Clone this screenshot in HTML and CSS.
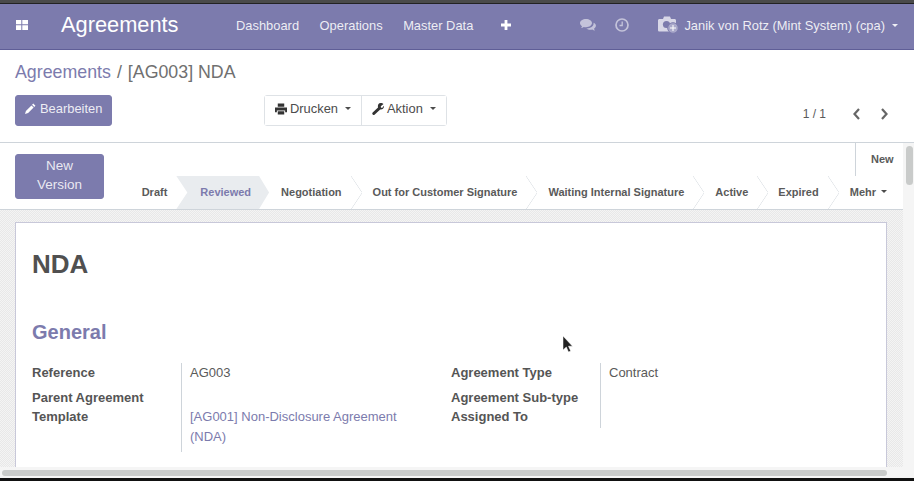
FILE: index.html
```html
<!DOCTYPE html>
<html lang="de">
<head>
<meta charset="utf-8">
<title>Agreements</title>
<link rel="stylesheet" href="styles.css">
</head>
<body>
<div class="topedge"></div>
<header class="navbar">
  <svg class="apps" viewBox="0 0 12 10" width="12" height="10"><path d="M0 0h5.300v4.300H0zM6.300 0h5.700v4.300H6.300zM0 5.300h5.300V10H0zM6.300 5.300h5.700V10H6.300z"/></svg>
  <span class="brand">Agreements</span>
  <nav class="menu"><a>Dashboard</a><a>Operations</a><a>Master Data</a>
    <svg class="plus" viewBox="0 0 10 10" width="10" height="10"><path d="M3.600 0h2.800v3.600H10v2.800H6.400V10H3.600V6.400H0V3.600h3.600z"/></svg>
  </nav>
  <div class="systray">
    <svg class="chat" viewBox="0 0 16 13" width="16" height="13"><path d="M6 0C2.700 0 0 1.800 0 4.100c0 1.200.8 2.300 2 3.100-.2.7-.6 1.300-1 1.800 1 0 2-.5 2.800-1.100.7.2 1.400.3 2.200.3 3.300 0 6-1.800 6-4.100S9.300 0 6 0z"/><path d="M13.500 3.800c.1.300.1.500.1.800 0 2.800-3.100 4.800-6.500 4.800-.3 0-.6 0-.8 0 1.100.8 2.500 1.300 4.100 1.300.7 0 1.300-.1 1.900-.3.700.6 1.700 1 2.700 1.100-.4-.5-.8-1.100-1-1.800 1.200-.8 1.900-1.900 1.900-3.100 0-1.100-.9-2-2.400-2.800z"/></svg>
    <svg class="clock" viewBox="0 0 14 14" width="14" height="14"><circle cx="7" cy="7" r="6" fill="none" stroke-width="1.700"/><path d="M7.200 3.500v4H4.500" fill="none" stroke-width="1.300"/></svg>
    <svg class="avatar" viewBox="0 0 22 20" width="22" height="20"><path class="cam" d="M0 5.500C0 4.500.7 4 1.500 4H5l1-2.500h6L13 4h3.500c.8 0 1.500.5 1.500 1.500V15c0 1-.7 1.500-1.500 1.500h-15C.7 16.500 0 16 0 15z"/><circle class="lens" cx="8.500" cy="9.500" r="3.600"/><circle class="badge" cx="15" cy="13" r="5.300"/><path class="badgeplus" d="M15 10v6M12 13h6"/></svg>
    <span class="user">Janik von Rotz (Mint System) (cpa)</span><i class="caret"></i>
  </div>
</header>

<section class="controlpanel">
  <div class="crumbs"><a>Agreements</a><span class="sep">/</span><span>[AG003] NDA</span></div>
  <div class="cp-row">
    <button class="btn primary edit"><svg viewBox="0 0 12 12" width="11" height="11"><path d="M9 .6l2.400 2.400-1.300 1.300L7.700 1.900zM7 2.600L9.400 5 3.400 11 0 12l1-3.400z"/></svg>Bearbeiten</button>
    <div class="btngroup">
      <button class="btn"><svg viewBox="0 0 13 12" width="12" height="12"><path d="M3 0h7v3.500H3zM0 4.500h13V9.500H11V7.500H2v2H0zM3 8.500h7V12H3z"/></svg>Drucken<i class="caret dark"></i></button>
      <button class="btn"><svg viewBox="0 0 12 12" width="12" height="12"><path d="M8.500 0C10 0 11 .5 11.500 1L8.800 3.200l.1 1.300 1.200.6L12 2.700c.3 1.900-1.200 4.200-3.800 3.800L2.800 11.600c-.6.600-1.600.6-2.100 0-.6-.6-.6-1.500 0-2.100l5.300-5C5.500 2.200 6.500 0 8.500 0z"/></svg>Aktion<i class="caret dark"></i></button>
    </div>
    <div class="pager">
      <span class="count">1 / 1</span>
      <svg viewBox="0 0 8 12" width="9" height="12"><path d="M6.500 1L2 6l4.500 5" fill="none" stroke-width="2.200"/></svg>
      <svg viewBox="0 0 8 12" width="9" height="12"><path d="M1.500 1L6 6l-4.500 5" fill="none" stroke-width="2.200"/></svg>
    </div>
  </div>
</section>

<div class="viewport">
  <main class="scrollarea">
    <div class="statusbar">
      <button class="btn primary newversion">New<br>Version</button>
      <div class="status-right">
        <div class="kanban"><span>New</span></div>
        <div class="stages">
          <span class="stage draft">Draft</span>
          <span class="stage current">Reviewed</span>
          <span class="stage">Negotiation</span>
          <span class="stage">Out for Customer Signature</span>
          <span class="stage">Waiting Internal Signature</span>
          <span class="stage">Active</span>
          <span class="stage expired">Expired</span>
          <span class="stage more">Mehr<i class="caret dark"></i></span>
        </div>
      </div>
    </div>
    <div class="background">
      <article class="sheet">
        <h1>NDA</h1>
        <h2>General</h2>
        <div class="cols">
          <div class="fields left">
            <div class="labels">
              <div class="lab one">Reference</div>
              <div class="lab">Parent Agreement<br>Template</div>
            </div>
            <div class="values">
              <div class="val one">AG003</div>
              <div class="val link">[AG001] Non-Disclosure Agreement (NDA)</div>
            </div>
          </div>
          <div class="fields right">
            <div class="labels">
              <div class="lab one">Agreement Type</div>
              <div class="lab">Agreement Sub-type</div>
              <div class="lab">Assigned To</div>
            </div>
            <div class="values">
              <div class="val one">Contract</div>
            </div>
          </div>
        </div>
      </article>
    </div>
  </main>
  <div class="vscroll"><div class="vthumb"></div></div>
</div>
<div class="hscroll"><div class="hthumb"></div></div>
<div class="bottomedge"></div>
<svg class="cursor" viewBox="0 0 12 19" width="12" height="19"><path d="M1 1v14l3.300-3 2.200 5 2.200-1-2.200-4.800H10.500z"/></svg>
</body>
</html>
```

FILE: styles.css
```css
* { box-sizing: border-box; }
html, body { margin: 0; padding: 0; height: 481px; overflow: hidden; }
body {
  width: 914px;
  position: relative;
  display: flex;
  flex-direction: column;
  font-family: "Liberation Sans", Arial, sans-serif;
  font-size: 13px;
  color: #5a5a5a;
  background: #fff;
}
.topedge { height: 4px; flex: none; background: #4a4a4a; border-bottom: 1px solid #222; }
.navbar {
  height: 46px; flex: none;
  display: flex; align-items: center;
  padding-bottom: 3px;
  background: #7c7bad;
  border-bottom: 1px solid #5f5e97;
  color: #fff;
}
.apps { fill: #fff; margin-left: 16px; }
.brand { font-size: 21.800px; margin-left: 33px; width: 175px; color: #fff; }
.menu { display: flex; align-items: center; gap: 20.500px; font-size: 12.900px; color: rgba(255,255,255,.88); }
.plus { fill: #fff; margin-left: 7px; }
.systray { margin-left: auto; display: flex; align-items: center; color: rgba(255,255,255,.88); padding-right: 16px; font-size: 12.900px; }
.chat { fill: rgba(255,255,255,.55); }
.clock { stroke: rgba(255,255,255,.55); margin-left: 19px; }
.avatar { margin-left: 29px; }
.cam { fill: rgba(255,255,255,.7); }
.lens { fill: #7c7bad; }
.badge { fill: #a9a8ca; stroke: #7c7bad; stroke-width: 1; }
.badgeplus { stroke: #fff; stroke-width: 1; fill: none; }
.user { margin-left: 4px; }
.caret { display: inline-block; margin-left: 7px; width: 0; height: 0; border-top: 3.500px solid rgba(255,255,255,.88); border-left: 3.500px solid transparent; border-right: 3.500px solid transparent; }
.caret.dark { border-top: 3px solid #4c4c4c; border-left-width: 3px; border-right-width: 3px; margin-left: 4px; }

.controlpanel { height: 93px; flex: none; padding: 12px 15px 0; border-bottom: 1px solid #ced4da; background: #fff; }
.crumbs { font-size: 17.800px; line-height: 21px; color: #707070; display: flex; gap: 6px; }
.crumbs a { color: #7c7bad; }
.cp-row { display: flex; align-items: flex-start; margin-top: 12px; }
.btn { font: inherit; font-size: 12.900px; border: 1px solid #dee2e6; background: #fff; color: #4c4c4c; height: 31px; padding: 0 10px 4px; display: inline-flex; align-items: center; gap: 3px; }
.btn svg { fill: #333; flex: none; }
.btn.primary { background: #7c7bad; color: #fff; border: 1px solid #7c7bad; border-radius: 3px; }
.edit { width: 97px; color: rgba(255,255,255,.88) !important; padding: 0 9px 4px; gap: 4px; }
.edit svg { fill: #fff; }
.btngroup { display: flex; margin-left: 152px; border: 1px solid #dee2e6; border-radius: 3px; height: 31px; }
.btngroup .btn { border: 0; height: 29px; padding: 0 10px 4px; }
.btngroup .btn + .btn { border-left: 1px solid #dee2e6; }
.pager { margin-left: auto; display: flex; align-items: center; height: 31px; padding: 6px 10px 0 0; gap: 19px; }
.pager svg { stroke: #666; }
.pager .count { font-size: 12px; margin-right: 7px; }

.viewport { flex: 1; display: flex; min-height: 0; }
.scrollarea { flex: 1; min-width: 0; display: flex; flex-direction: column; overflow: hidden; }
.statusbar { height: 67px; flex: none; display: flex; justify-content: space-between; padding-left: 15px; border-bottom: 1px solid #ced4da; background: #fff; position: relative; }
.newversion { width: 89px; height: 45px; margin-top: 11px; padding: 0 4px 4px; text-align: center; line-height: 19px; justify-content: center; color: rgba(255,255,255,.85) !important; font-size: 13.500px; }
.status-right { display: flex; flex-direction: column; align-items: flex-end; }
.kanban { height: 33px; width: 48px; border-left: 1px solid #ced4da; font-size: 11px; font-weight: 700; display: flex; align-items: center; padding: 0 0 2px 15px; }
.stages { display: flex; height: 33px; font-size: 11px; font-weight: 700; }
.stage { position: relative; display: flex; align-items: center; padding: 0 20px 2px 11px; color: #5a5a5a; white-space: nowrap; }
.stage::after { content: ""; position: absolute; right: 0; top: 0; width: 11px; height: 33px; background: linear-gradient(to top right, transparent calc(50% - .6px), #dee2e6 50%, transparent calc(50% + .6px)) top/100% 50% no-repeat, linear-gradient(to bottom right, transparent calc(50% - .6px), #dee2e6 50%, transparent calc(50% + .6px)) bottom/100% 50% no-repeat; }
.stage.draft { padding-right: 9px; }
.stage.draft::after { display: none; }
.stage.current { background: #e9ecef; color: #7c7bad; clip-path: polygon(0 0, calc(100% - 10px) 0, 100% 50%, calc(100% - 10px) 100%, 0 100%, 11px 50%); padding: 0 18px 2px 24px; }
.stage.current::after { display: none; }
.stage.current + .stage { padding-left: 12px; }
.stage.expired { padding-left: 10px; }
.stage.more { padding-right: 16px; }
.stage.more::after { display: none; }
.more .caret { margin-left: 5px; }

.background {
  flex: 1; min-height: 0; padding: 12px 16px 0 15px;
  background-color: #f4f4f4;
  background-image: linear-gradient(45deg, #e8e8e8 25%, transparent 25%, transparent 75%, #e8e8e8 75%), linear-gradient(45deg, #e8e8e8 25%, transparent 25%, transparent 75%, #e8e8e8 75%);
  background-size: 2px 2px; background-position: 0 0, 1px 1px;
}
.sheet { background: #fff; border: 1px solid #c8c8d9; border-bottom: 0; height: 100%; padding: 0 16px; }
.sheet h1 { margin: 26px 0 0; font-size: 26px; line-height: 30px; font-weight: 700; color: #505050; }
.sheet h2 { margin: 41px 0 0; font-size: 20px; line-height: 24px; font-weight: 700; color: #7c7bad; }
.cols { display: flex; align-items: flex-start; margin-top: 19px; }
.fields { display: flex; align-items: flex-start; }
.left { width: 419px; }
.labels { font-weight: 700; color: #555; }
.left .labels { width: 150px; border-right: 1px solid #ced4da; padding-bottom: 26px; }
.right .labels { width: 150px; border-right: 1px solid #ced4da; padding-bottom: 2px; }
.lab { line-height: 19px; margin-bottom: 6px; }
.lab:last-child { margin-bottom: 0; }
.lab + .lab + .lab { margin-top: -6px; }
.val { line-height: 19px; }
.values { padding-left: 8px; }
.left .values { width: 224px; }
.val.one { margin-bottom: 25px; }
.val.link { color: #7c7bad; line-height: 20px; }

.vscroll { width: 11px; flex: none; background: #f5f5f5; padding: 3px 1px 0 3px; }
.vthumb { width: 7px; height: 39px; border-radius: 4px; background: #c9cbca; }
.hscroll { height: 11px; flex: none; background: #f5f5f5; padding: 3px 0 0 2px; }
.hthumb { width: 885px; height: 6px; border-radius: 3px; background: #c9cbca; }
.bottomedge { height: 3px; flex: none; background: #111; }
.cursor { position: absolute; left: 562px; top: 335px; fill: #222; stroke: #fff; stroke-width: .5; }
```
